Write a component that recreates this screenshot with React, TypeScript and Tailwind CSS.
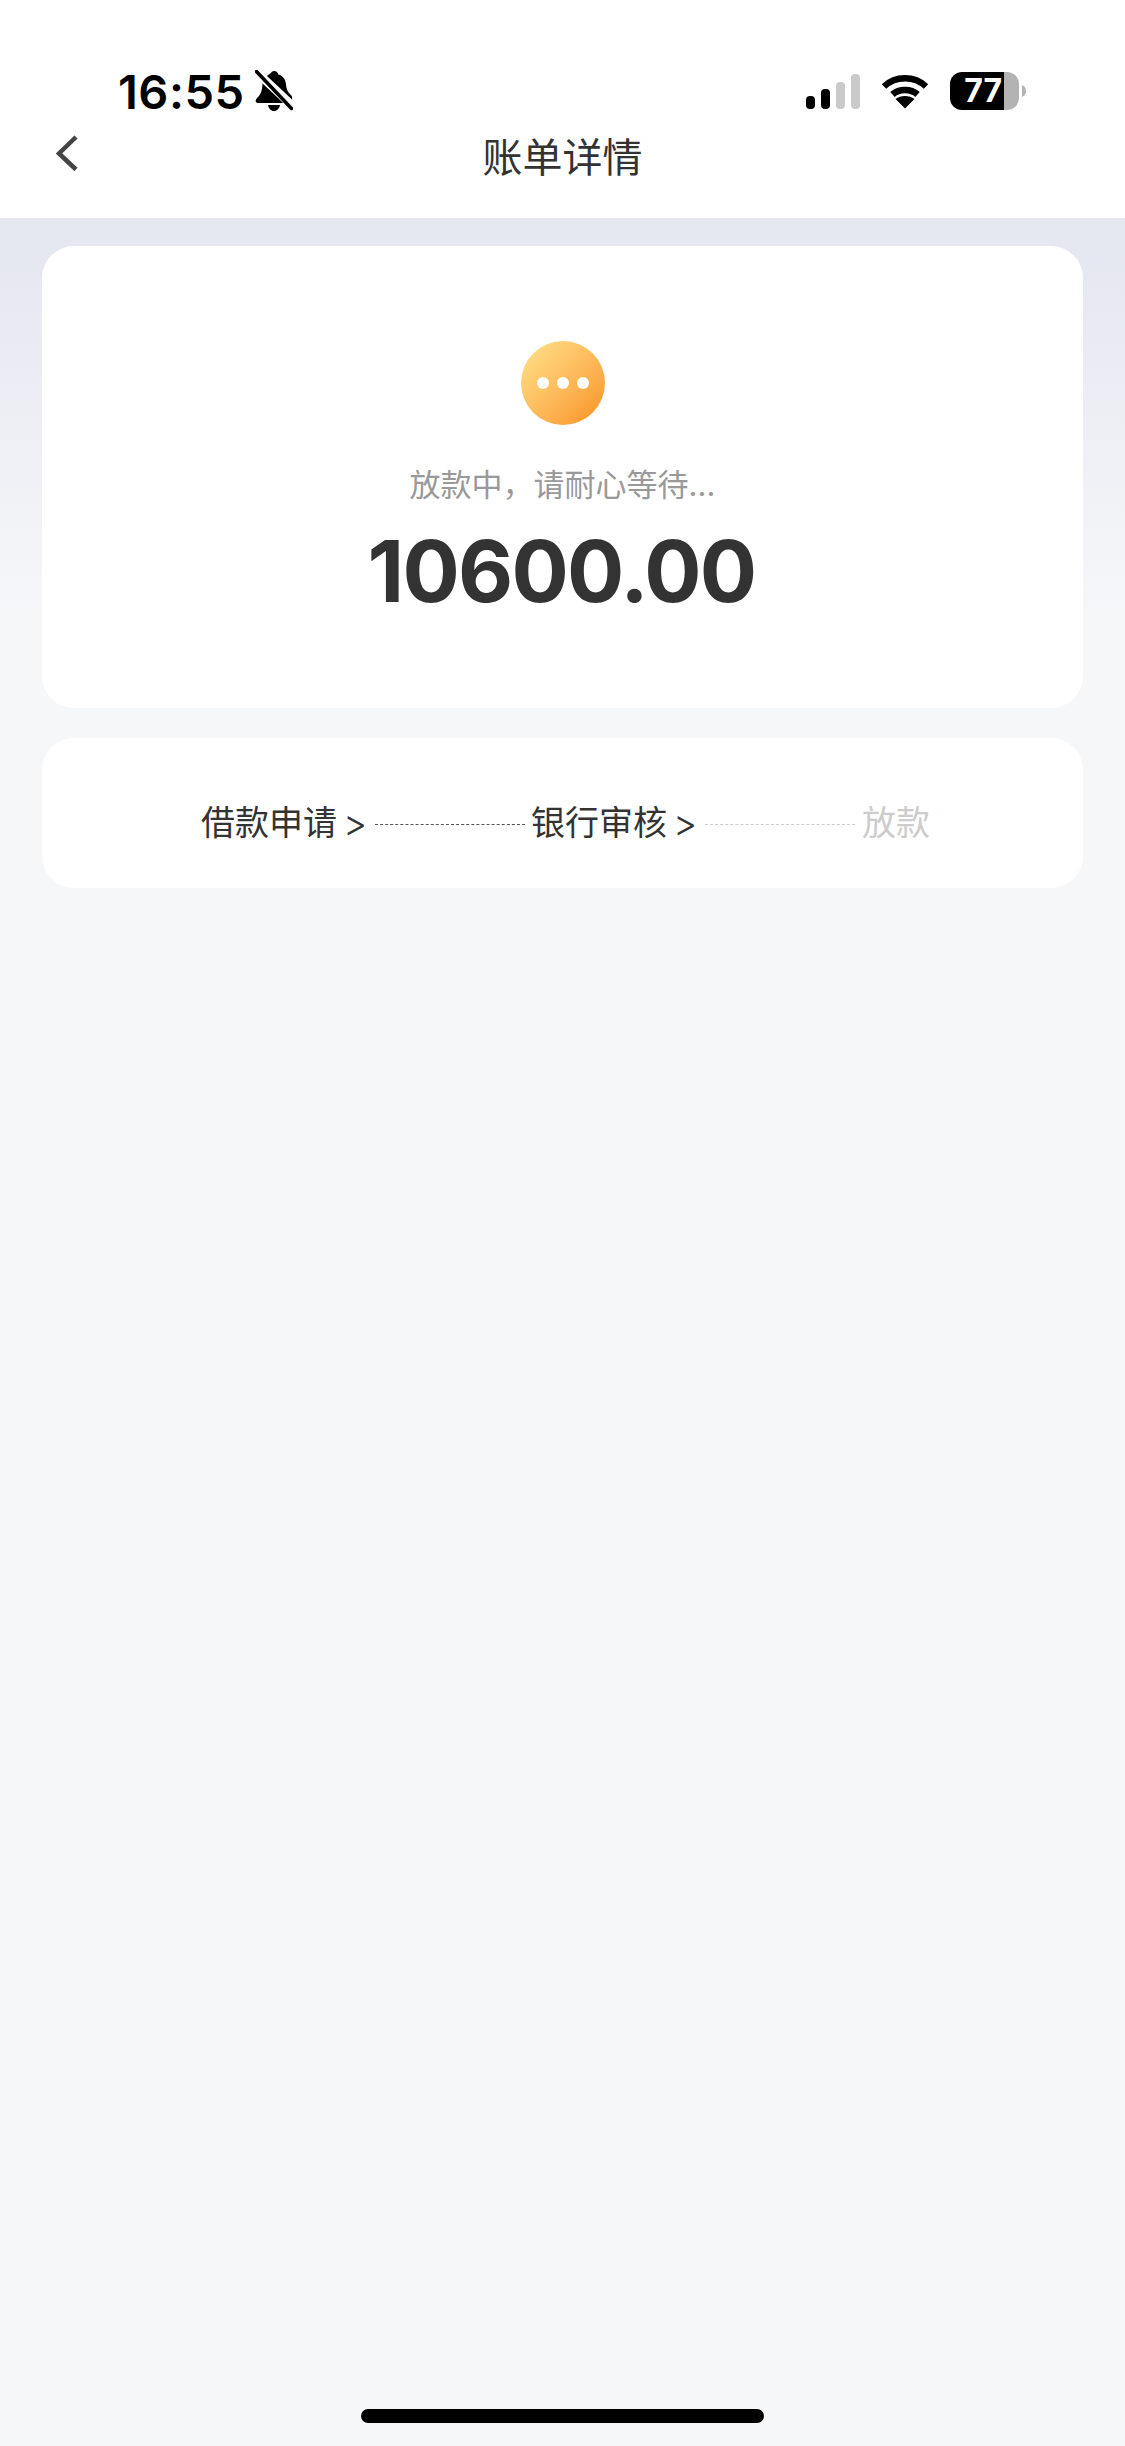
const FONT = "font-['Inter','Noto_Sans_CJK_SC',sans-serif]";

function BellSlash() {
  return (
    <svg width="38" height="42" viewBox="0 0 38 42" fill="none">
      <path
        d="M19 1c2.400 0 4 1.500 4.300 3.400 5 1.300 7.500 5.300 7.800 10.600.2 3.800 1.500 7 4.300 9.500 1.500 1.400 2.200 3 1.600 5L12 6C13.500 4.500 15 3.500 16 2.900 16.700 1.700 17.700 1 19 1zM7.600 13.500 28.500 33H3.200C1 33 0 31.500 1 29.500c.6-1.200 1.800-2.200 3-3.600 2.400-2.800 3.200-7 3.600-12.400zM13 35h12c-.6 3.500-3 6-6 6s-5.400-2.500-6-6z"
        fill="#000"
      />
      <path d="M1 -1 37 36" stroke="#fff" strokeWidth="3" />
      <path d="M1 3 37 40" stroke="#fff" strokeWidth="3" />
      <path d="M1.500 1.500 36.500 38.500" stroke="#000" strokeWidth="3.500" strokeLinecap="round" />
    </svg>
  );
}

function SignalBars() {
  return (
    <svg width="54" height="35" viewBox="0 0 54 35">
      <rect x="0" y="22" width="9" height="13" rx="4" fill="#000" />
      <rect x="15" y="15" width="9" height="20" rx="4" fill="#000" />
      <rect x="30" y="8" width="9" height="27" rx="4" fill="#c9c9c9" />
      <rect x="45" y="0" width="9" height="35" rx="4" fill="#c9c9c9" />
    </svg>
  );
}

function Wifi() {
  return (
    <svg width="48" height="36" viewBox="0 0 48 36" fill="none">
      <path d="M3 13.500C14.500 2.500 33.500 2.500 45 13.500" stroke="#000" strokeWidth="6.500" />
      <path d="M11.500 21.500C18 15.500 30 15.500 36.500 21.500" stroke="#000" strokeWidth="6.500" />
      <path d="M24 35.500 14.500 26C19.500 22 28.500 22 33.500 26Z" fill="#000" />
    </svg>
  );
}

function Battery() {
  return (
    <div className="flex items-center">
      <div className="flex h-[38px] w-[69px]">
        <div className="flex w-[54px] items-center justify-end rounded-l-[12px] bg-black pr-[2px]">
          <span className="font-['Inter',sans-serif] text-[32px] leading-none font-bold text-white">77</span>
        </div>
        <div className="flex-1 rounded-r-[12px] bg-[#b3b3b3]" />
      </div>
      <svg className="ml-[3px]" width="4" height="12" viewBox="0 0 4 12">
        <path d="M0 0c2.500 1 4 3 4 6s-1.500 5-4 6z" fill="#b3b3b3" />
      </svg>
    </div>
  );
}

function Chevron() {
  return <span className="w-[38px] pl-[6px] text-[37px] leading-[46px] font-light">&gt;</span>;
}

export default function App() {
  return (
    <div className={`${FONT} flex min-h-[2446px] w-[1125px] flex-col bg-[#f6f7f9]`}>
      {/* status bar + nav */}
      <header className="flex h-[218px] flex-col bg-white pt-[70px]">
        <div className="flex h-[42px] items-center pr-[99px] pl-[118px]">
          <span className="text-[47px] leading-none font-semibold tracking-[0.5px] text-black">16:55</span>
          <span className="ml-[10px]">
            <BellSlash />
          </span>
          <div className="ml-auto flex items-center gap-[21px]">
            <SignalBars />
            <Wifi />
            <Battery />
          </div>
        </div>
        <div className="relative mt-[21px] flex h-[50px] items-center justify-center">
          <svg className="absolute top-[0px] left-[54px]" width="26" height="40" viewBox="0 0 26 40" fill="none">
            <path d="M22 4 5 20.500 22 36.500" stroke="#444" strokeWidth="4.500" />
          </svg>
          <h1 className="text-[40px] leading-none font-normal text-[#333]">账单详情</h1>
        </div>
      </header>

      <main className="flex flex-1 flex-col bg-[linear-gradient(180deg,#e4e6f0_0px,#f6f7f9_400px)] px-[42px] pt-[28px]">
        <section className="flex h-[462px] flex-col items-center rounded-[32px] bg-white pt-[95px]">
          <div className="flex h-[84px] w-[84px] items-center justify-center gap-[8px] rounded-full bg-gradient-to-br from-[#ffe48c] to-[#f7921a]">
            <span className="h-[12px] w-[12px] rounded-full bg-white" />
            <span className="h-[12px] w-[12px] rounded-full bg-white" />
            <span className="h-[12px] w-[12px] rounded-full bg-white" />
          </div>
          <p className="mt-[38px] text-[31px] leading-[44px] text-[#999]">{"放款中\uFF0C请耐心等待..."}</p>
          <p className="mt-[15px] pr-[2px] text-[85px] leading-[100px] font-bold tracking-[-1.75px] text-[#333]">10600.00</p>
        </section>

        <section className="mt-[30px] flex h-[150px] items-start rounded-[32px] bg-white pt-[60px] pl-[159px]">
          <div className="flex items-center text-[34px] leading-[50px] text-[#333]">
            <span>借款申请</span>
            <Chevron />
            <div className="mt-[2px] mr-[6px] w-[150px] border-t-[1.500px] border-dashed border-[#555]" />
            <span>银行审核</span>
            <Chevron />
            <div className="mt-[2px] mr-[7px] w-[150px] border-t-[1.500px] border-dashed border-[#ccc]" />
            <span className="text-[#ccc]">放款</span>
          </div>
        </section>

        <div className="mx-auto mt-auto mb-[23px] h-[14px] w-[403px] rounded-full bg-black" />
      </main>
    </div>
  );
}
